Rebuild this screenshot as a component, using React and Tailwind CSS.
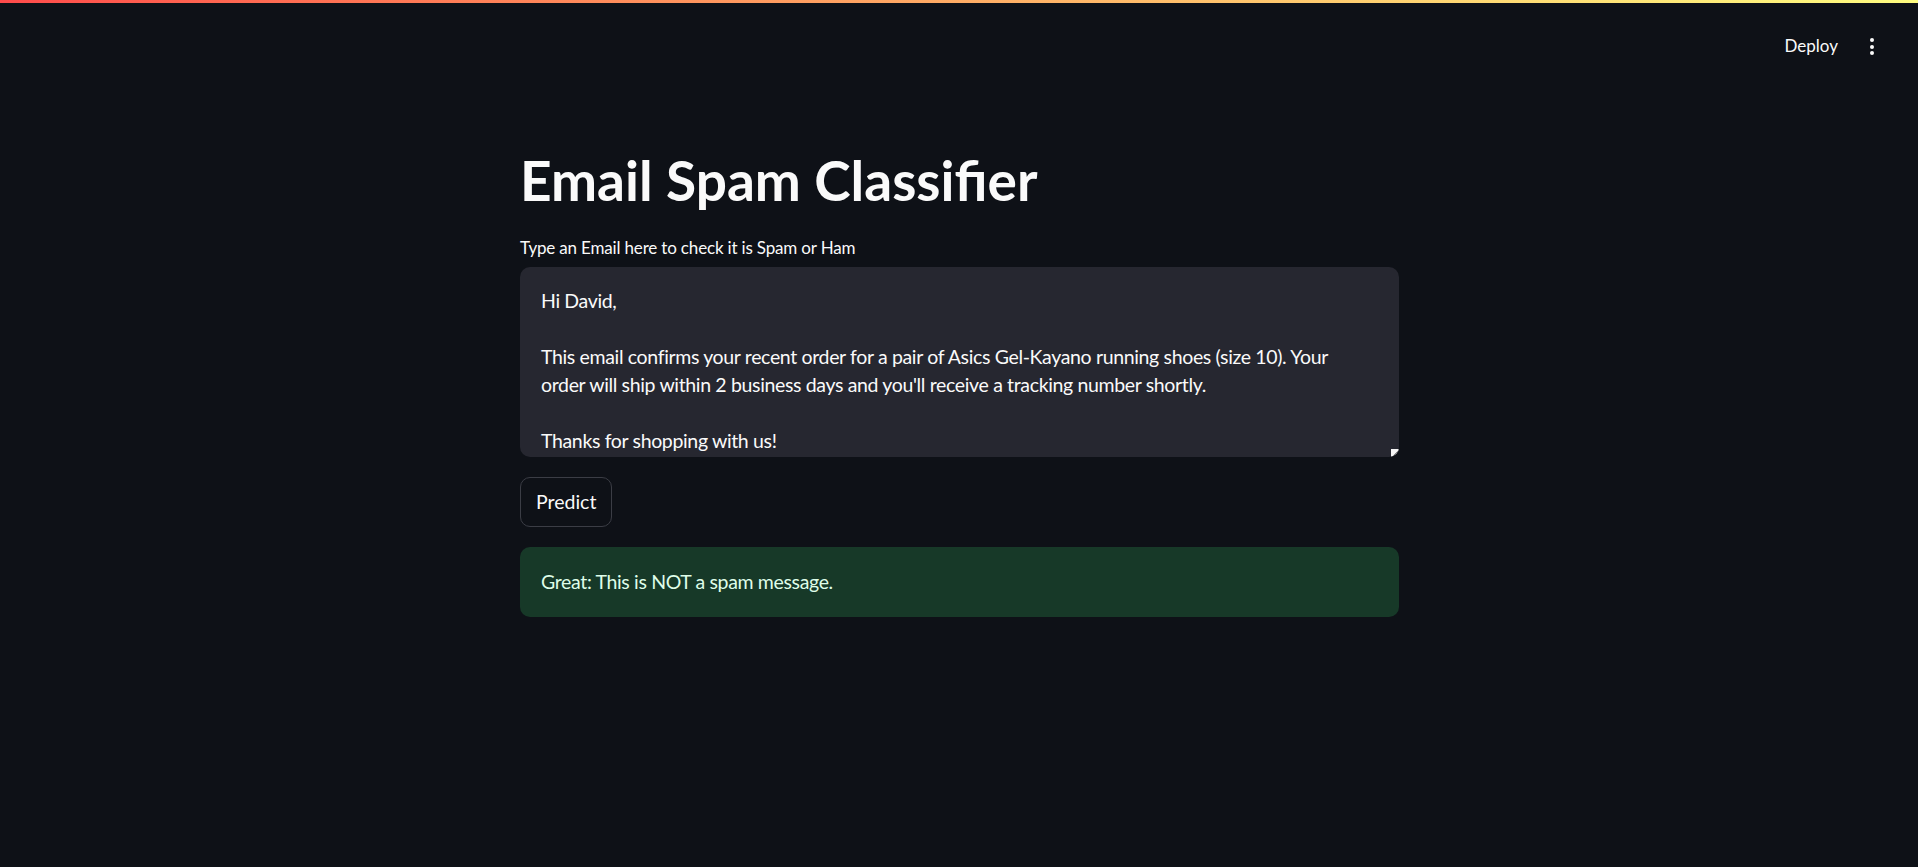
const emailLines = [
  'Hi David,',
  '',
  'This email confirms your recent order for a pair of Asics Gel-Kayano running shoes (size 10). Your',
  "order will ship within 2 business days and you'll receive a tracking number shortly.",
  '',
  'Thanks for shopping with us!',
];

const font = { fontFamily: 'Lato, "Noto Sans", sans-serif' };

export default function App() {
  return (
    <div className="min-h-screen bg-[#0e1117] text-[#fafafa]" style={font}>
      <div className="h-[3px] bg-gradient-to-r from-[#ff4b4b] to-[#fffd80]" />

      <header className="flex h-[72px] items-start justify-end pr-[44px] pt-[31px]">
        <button className="text-[17px] leading-[24px] text-[#fafafa]">Deploy</button>
        <div className="ml-[32px] flex flex-col items-center gap-[2.5px] pt-[4px]">
          <span className="h-[4px] w-[4px] rounded-full bg-[#fafafa]" />
          <span className="h-[4px] w-[4px] rounded-full bg-[#fafafa]" />
          <span className="h-[4px] w-[4px] rounded-full bg-[#fafafa]" />
        </div>
      </header>

      <main className="mx-auto w-[880px] pt-[72px] pl-[1px]">
        <h1 className="text-[55px] font-bold leading-[66px]">Email Spam Classifier</h1>

        <label className="mt-[21px] block text-[17px] leading-[28px] tracking-[-0.17px]">
          Type an Email here to check it is Spam or Ham
        </label>

        <div className="relative mt-[5px] h-[190px] overflow-hidden rounded-[10px] bg-[#262730] px-[21px] pt-[20px]">
          {emailLines.map((line, i) => (
            <div key={i} className="h-[28px] whitespace-nowrap text-[19.5px] leading-[28px] tracking-[-0.35px]">
              {line}
            </div>
          ))}
          <svg className="absolute bottom-0 right-0" width="9" height="9" viewBox="0 0 9 9">
            <rect x="1" y="1" width="8" height="8" fill="#f5f5f5" />
            <path d="M3 8 L8 3 M6 8 L8 6" stroke="#8a8a8a" strokeWidth="1" />
          </svg>
        </div>

        <div className="mt-[20px] flex">
          <button className="rounded-[10px] border border-[#3b3d45] bg-[#0e1117] px-[15px] py-[10px] text-[19.5px] leading-[28px] text-[#fafafa]">
            <span className="block whitespace-nowrap">Predict</span>
          </button>
        </div>

        <div className="mt-[20px] flex h-[70px] items-center rounded-[10px] bg-[#173928] px-[21px] text-[19.5px] tracking-[-0.35px] text-[#dffde9]">
          Great: This is NOT a spam message.
        </div>
      </main>
    </div>
  );
}
